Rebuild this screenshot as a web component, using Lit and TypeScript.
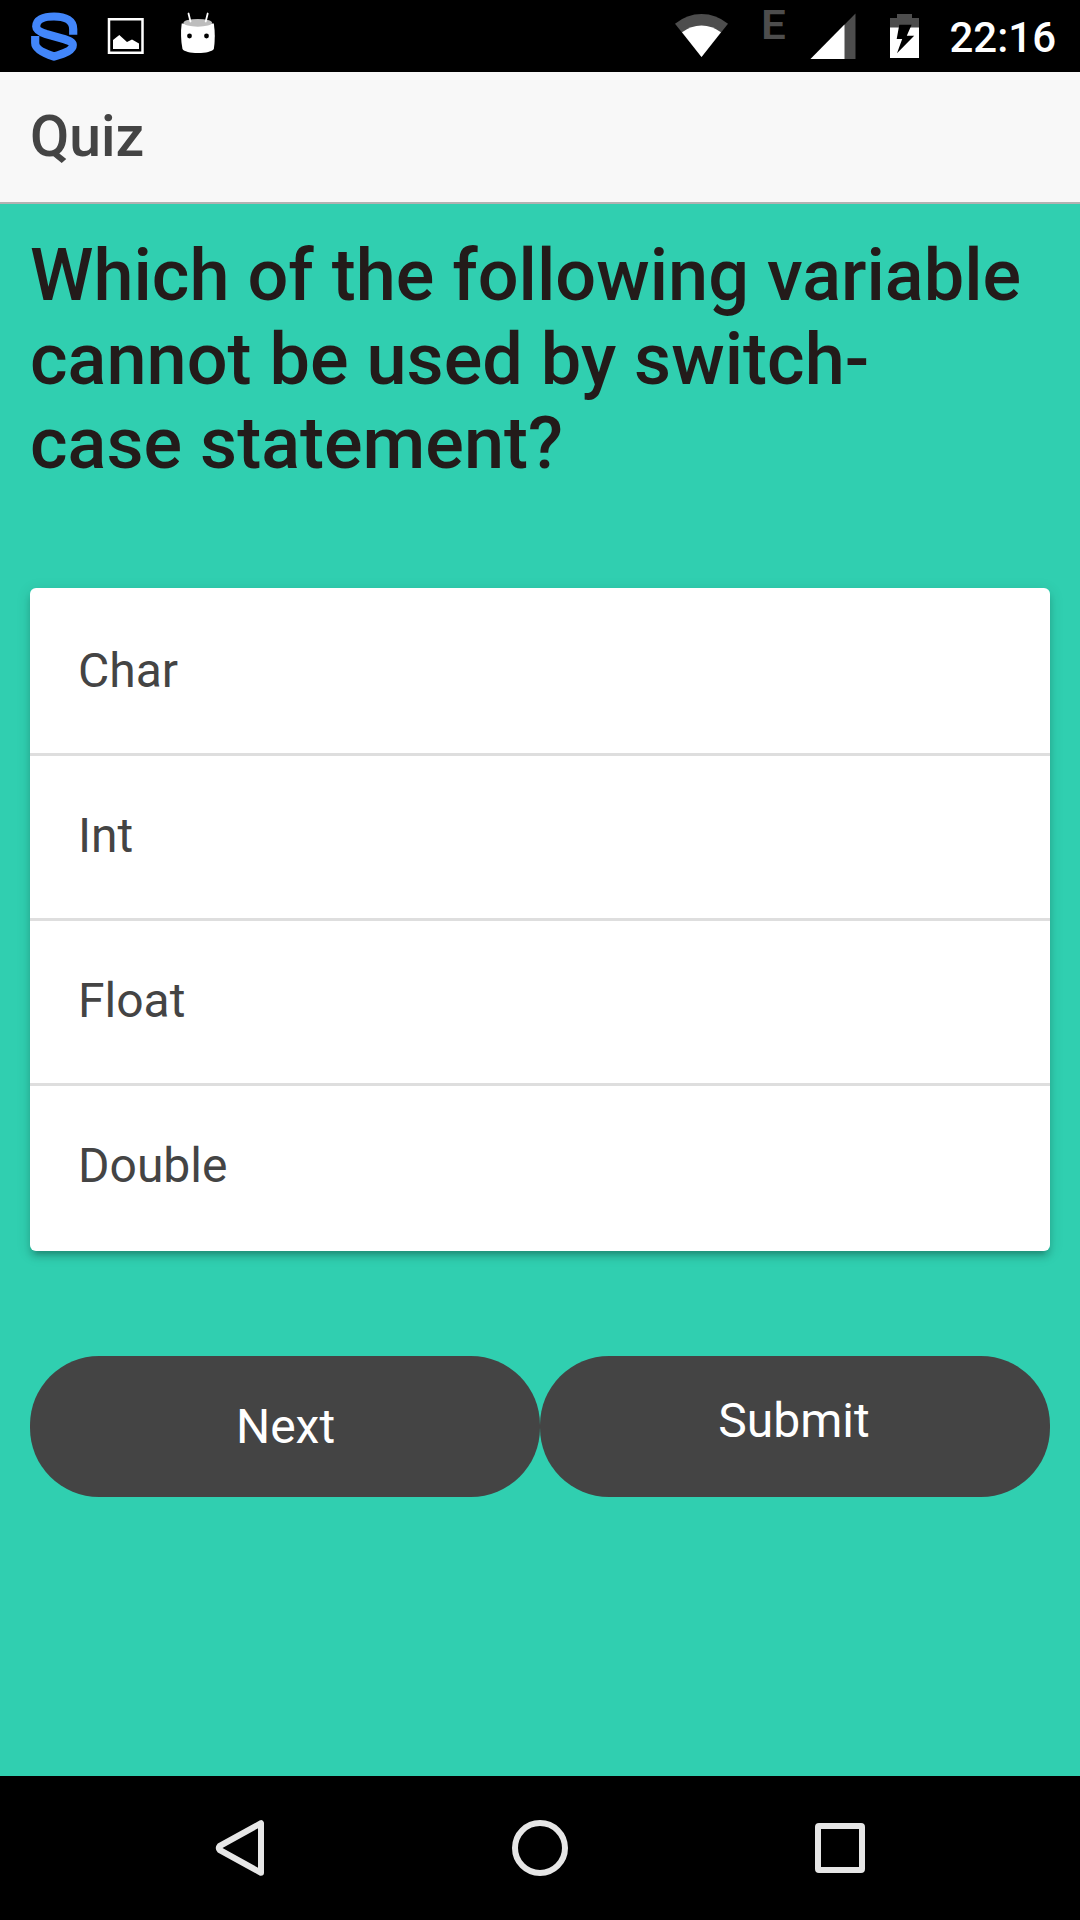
import { LitElement, html, css } from "lit";
import { customElement, property } from "lit/decorators.js";

@customElement("status-bar")
export class StatusBar extends LitElement {
  @property() time = "22:16";

  static styles = css`
    :host {
      display: flex;
      justify-content: space-between;
      height: 72px;
      padding: 0 24px 0 30px;
      background: #000;
      color: #fff;
    }
    .notifications,
    .system {
      display: flex;
      align-items: center;
    }
    .notifications {
      gap: 24px;
    }
    svg {
      display: block;
      flex: none;
    }
    .network {
      align-self: flex-start;
      width: 24px;
      margin: 0 25px 0 32px;
      font-size: 40px;
      font-weight: 600;
      line-height: 52px;
      color: #4d4d4d;
      transform: scaleX(1.1);
      transform-origin: left;
    }
    .battery {
      margin: 0 30px 0 34px;
    }
    .time {
      padding-top: 3px;
      font-size: 42px;
      font-weight: 500;
      line-height: 72px;
    }
  `;

  render() {
    return html`
      <div class="notifications">
        <svg width="48" height="72" viewBox="30 0 48 72">
          <path
            d="M73.2 34.8V29C73.2 21 66 16.5 54 16.5C43 16.5 36.2 20 36.2 26.5C36.2 30 40 32 46 34L62 38.5C69 40.5 72.8 42 72.8 45C72.8 50 66 53 54 56.5C43 53 35.2 49 35.2 43V36"
            fill="none" stroke="#4286fa" stroke-width="8.2" />
        </svg>
        <svg width="48" height="72" viewBox="102 0 48 72">
          <rect x="109" y="19.25" width="33.5" height="33.5" fill="none" stroke="#fff" stroke-width="2.5" />
          <path d="M113 49V40L119.3 35L127 42L132 39.5L139 43.5V49Z" fill="#fff" />
        </svg>
        <svg width="48" height="72" viewBox="174 0 48 72">
          <path d="M181.7 23.5H213.8Q215.8 36 213.8 49C212 51.5 206 53 198 53S184 51.5 182.5 49Q180 36 181.7 23.5Z" fill="#fff" />
          <ellipse cx="197.8" cy="22.8" rx="14.3" ry="3.9" fill="#bdbdbd" />
          <path d="M188.5 13.5L190.5 21.5M207.7 13.5L205.7 21.5" stroke="#fff" stroke-width="1.8" stroke-linecap="round" />
          <circle cx="189.5" cy="36" r="2.4" fill="#000" />
          <circle cx="206.5" cy="36" r="2.4" fill="#000" />
        </svg>
      </div>
      <div class="system">
        <svg width="54" height="72" viewBox="674 0 54 72">
          <path d="M674 23.7Q686 14 700.5 14T727 23.7L700.5 57Z" fill="#4d4d4d" />
          <path d="M681 32.3Q690 25.5 700.5 25.5T720 32.3L700.5 57Z" fill="#fff" />
        </svg>
        <span class="network">E</span>
        <svg width="46" height="72" viewBox="810 0 46 72">
          <path d="M810.5 59L855.5 13.5V59Z" fill="#4d4d4d" />
          <path d="M810.5 59L844.5 24.6V59Z" fill="#fff" />
        </svg>
        <svg class="battery" width="29" height="72" viewBox="890 0 29 72">
          <path d="M890 28V18H897V14H912V18H919V28Z" fill="#4d4d4d" />
          <path d="M890 27.5H919V58H890Z" fill="#fff" />
          <path d="M899.3 24.7H911.6L906.8 35.7H914.2L897 53.3L902.2 38.9H896.7Z" fill="#000" />
        </svg>
        <span class="time">${this.time}</span>
      </div>
    `;
  }
}

@customElement("option-list")
export class OptionList extends LitElement {
  @property({ attribute: false }) options: string[] = [];

  static styles = css`
    :host {
      display: block;
    }
    .card {
      padding-top: 3px;
      border-radius: 6px;
      background: #fff;
      box-shadow: 0 6px 6px 0 rgba(0, 0, 0, 0.14), 0 9px 3px -6px rgba(0, 0, 0, 0.1), 0 3px 15px 0 rgba(0, 0, 0, 0.12);
    }
    .option {
      box-sizing: border-box;
      height: 165px;
      padding: 50px 48px 0;
      border-bottom: 3px solid #dedede;
      font-size: 48px;
      line-height: 60px;
      color: #444;
    }
    .option:last-child {
      border-bottom: 0;
    }
  `;

  render() {
    return html`<div class="card">
      ${this.options.map((o) => html`<div class="option">${o}</div>`)}
    </div>`;
  }
}

@customElement("nav-bar")
export class NavBar extends LitElement {
  static styles = css`
    :host {
      display: flex;
      align-items: center;
      justify-content: center;
      gap: 240px;
      height: 144px;
      background: #000;
    }
    svg {
      display: block;
      fill: none;
      stroke: #e6e6e6;
      stroke-width: 6;
    }
  `;

  render() {
    return html`
      <svg width="60" height="60" viewBox="210 1818 60 60">
        <path d="M261 1823.2V1872.8L219.7 1850Q218 1848 219.7 1846Z" stroke-linejoin="round" />
      </svg>
      <svg width="60" height="60" viewBox="510 1818 60 60">
        <circle cx="540" cy="1848" r="25" />
      </svg>
      <svg width="60" height="60" viewBox="810 1818 60 60">
        <rect x="818" y="1826" width="44" height="44" rx="1" />
      </svg>
    `;
  }
}

@customElement("app-root")
export class AppRoot extends LitElement {
  static styles = css`
    :host {
      display: flex;
      flex-direction: column;
      height: 1920px;
      font-family: Roboto, "Noto Sans", sans-serif;
      background: #30cfb0;
    }
    .header {
      box-sizing: border-box;
      height: 132px;
      padding: 0 30px;
      border-bottom: 2px solid #b2b2b2;
      background: #f8f8f8;
      font-size: 57px;
      font-weight: 500;
      line-height: 130px;
      color: #444;
    }
    .content {
      flex: 1;
      padding: 30px 30px 0;
    }
    .question {
      margin: 0 0 102px;
      font-size: 72px;
      font-weight: 500;
      line-height: 84px;
      letter-spacing: 0.03px;
      color: #231b1a;
    }
    .actions {
      display: grid;
      grid-template-columns: 1fr 1fr;
      margin-top: 105px;
    }
    .button {
      height: 141px;
      padding: 0 0 0 1px;
      border: 0;
      border-radius: 69px;
      background: #444;
      color: #fff;
      font-family: inherit;
      font-size: 48px;
      line-height: 141px;
      text-align: center;
    }
    .submit {
      line-height: 129px;
      padding: 0 2px 12px 0;
    }
  `;

  render() {
    return html`
      <status-bar></status-bar>
      <div class="header">Quiz</div>
      <div class="content">
        <h1 class="question">Which of the following variable cannot be used by switch-<br />case statement?</h1>
        <option-list .options=${["Char", "Int", "Float", "Double"]}></option-list>
        <div class="actions">
          <button class="button">Next</button>
          <button class="button submit">Submit</button>
        </div>
      </div>
      <nav-bar></nav-bar>
    `;
  }
}
